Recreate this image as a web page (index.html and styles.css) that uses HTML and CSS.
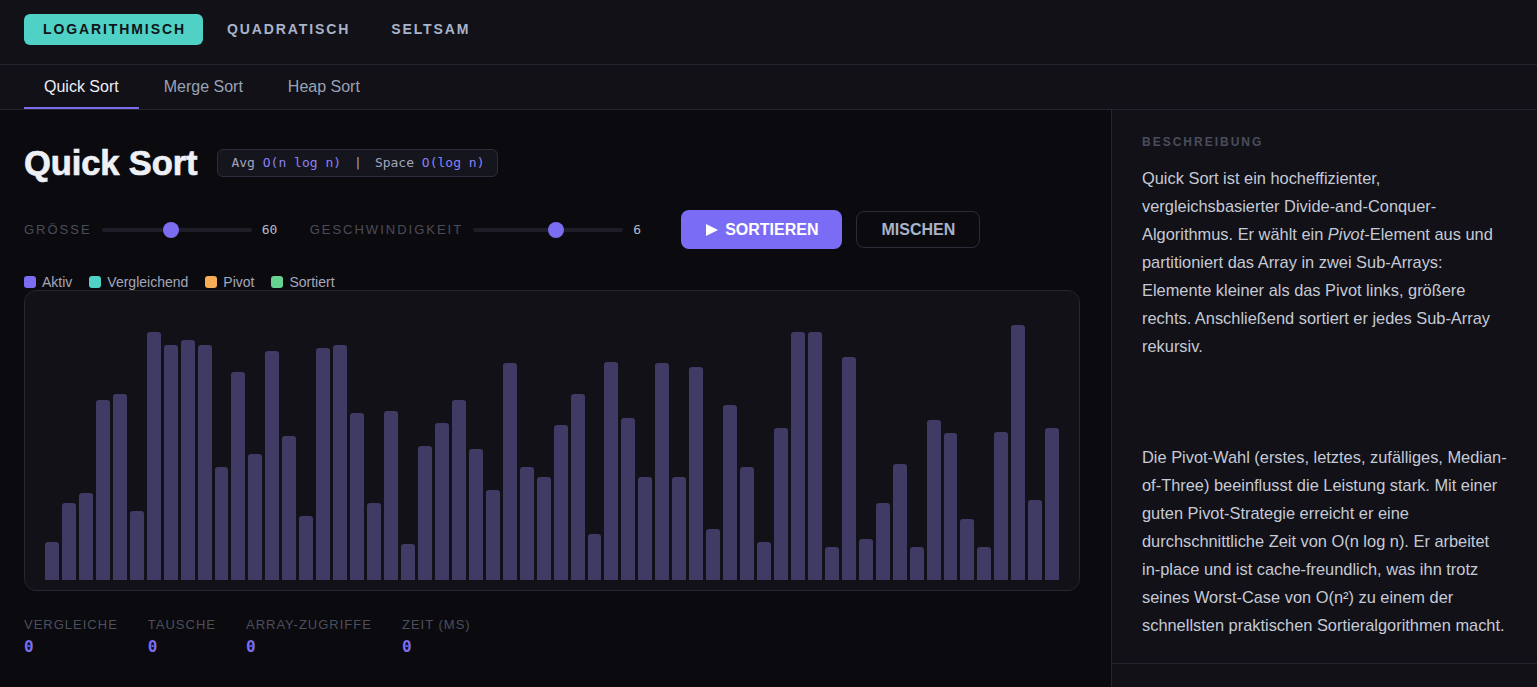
FILE: index.html
```html
<!DOCTYPE html>
<html lang="de">
<head>
<meta charset="utf-8">
<title>Sortier-Visualisierung</title>
<link rel="stylesheet" href="styles.css">
</head>
<body>
<div class="app">
  <nav class="topnav">
    <button class="pill pill-active">LOGARITHMISCH</button>
    <button class="pill">QUADRATISCH</button>
    <button class="pill">SELTSAM</button>
  </nav>
  <div class="tabs">
    <button class="tab tab-active">Quick Sort</button>
    <button class="tab">Merge Sort</button>
    <button class="tab">Heap Sort</button>
  </div>
  <div class="content">
    <main class="main">
      <div class="title-row">
        <h1 class="title">Quick Sort</h1>
        <div class="badge"><span class="muted">Avg</span> <span class="cx">O(n log n)</span><span class="sep">|</span><span class="muted">Space</span> <span class="cx">O(log n)</span></div>
      </div>
      <div class="controls">
        <div class="ctrl">
          <span class="ctrl-label">GRÖSSE</span>
          <input class="range" type="range" min="10" max="120" value="60">
          <span class="ctrl-value">60</span>
        </div>
        <div class="ctrl">
          <span class="ctrl-label">GESCHWINDIGKEIT</span>
          <input class="range" type="range" min="1" max="10" value="6">
          <span class="ctrl-value">6</span>
        </div>
        <button class="btn btn-primary"><span class="play"></span>SORTIEREN</button>
        <button class="btn btn-ghost">MISCHEN</button>
      </div>
      <div class="legend">
        <span class="legend-item"><span class="sw sw-active"></span>Aktiv</span>
        <span class="legend-item"><span class="sw sw-compare"></span>Vergleichend</span>
        <span class="legend-item"><span class="sw sw-pivot"></span>Pivot</span>
        <span class="legend-item"><span class="sw sw-sorted"></span>Sortiert</span>
      </div>
      <div class="chart">
        <div class="bars" id="bars"></div>
      </div>
      <div class="stats">
        <div class="stat"><div class="stat-label">VERGLEICHE</div><div class="stat-value">0</div></div>
        <div class="stat"><div class="stat-label">TAUSCHE</div><div class="stat-value">0</div></div>
        <div class="stat"><div class="stat-label">ARRAY-ZUGRIFFE</div><div class="stat-value">0</div></div>
        <div class="stat"><div class="stat-label">ZEIT (MS)</div><div class="stat-value">0</div></div>
      </div>
    </main>
    <aside class="side">
      <section class="desc">
        <div class="desc-label">BESCHREIBUNG</div>
        <p class="desc-text">Quick Sort ist ein hocheffizienter, vergleichsbasierter Divide-and-Conquer-Algorithmus. Er wählt ein <em>Pivot</em>-Element aus und partitioniert das Array in zwei Sub-Arrays: Elemente kleiner als das Pivot links, größere rechts. Anschließend sortiert er jedes Sub-Array rekursiv.</p>
        <p class="desc-text desc-second">Die Pivot-Wahl (erstes, letztes, zufälliges, Median-of-Three) beeinflusst die Leistung stark. Mit einer guten Pivot-Strategie erreicht er eine durchschnittliche Zeit von O(n log n). Er arbeitet in-place und ist cache-freundlich, was ihn trotz seines Worst-Case von O(n²) zu einem der schnellsten praktischen Sortieralgorithmen macht.</p>
      </section>
    </aside>
  </div>
</div>
<script src="script.js"></script>
</body>
</html>
```

FILE: script.js
```js
(function () {
  var heights = [38,77,87,180,186,69,248,235,240,235,113,208,126,229,144,64,232,235,167,77,169,36,134,157,180,131,90,217,113,103,155,186,46,218,162,103,217,103,213,51,175,113,38,152,248,248,33,223,41,77,116,33,160,147,61,33,148,255,80,152];
  var wrap = document.getElementById('bars');
  heights.forEach(function (h) {
    var b = document.createElement('div');
    b.className = 'bar';
    b.style.height = h + 'px';
    wrap.appendChild(b);
  });
})();
```

FILE: styles.css
```css
* { box-sizing: border-box; }
html, body { margin: 0; padding: 0; height: 100%; }
body {
  background: #0b0b0f;
  color: #e6e6ee;
  font-family: "Liberation Sans", Arial, sans-serif;
  overflow: hidden;
}
button { font-family: inherit; cursor: pointer; }
.app { display: flex; flex-direction: column; height: 100vh; }

.topnav {
  display: flex;
  align-items: center;
  gap: 5px;
  height: 65px;
  padding: 0 24px 6px;
  background: #111117;
  border-bottom: 1px solid #25252f;
}
.pill {
  height: 31px;
  padding: 0 17px 0 19px;
  border: none;
  border-radius: 6px;
  background: transparent;
  color: #a9b3c9;
  font-size: 14px;
  font-weight: 700;
  letter-spacing: 1.9px;
}
.pill-active { background: #4fd1c5; color: #0f1418; }

.tabs {
  display: flex;
  gap: 5px;
  padding: 0 24px;
  height: 45px;
  background: #111117;
  border-bottom: 1px solid #25252f;
}
.tab {
  padding: 2px 20px 0;
  height: 44px;
  border: none;
  border-bottom: 2px solid transparent;
  background: transparent;
  color: #9aa2b6;
  font-size: 16px;
}
.tab-active { color: #eeeef4; border-bottom-color: #7c6cf0; }

.content {
  flex: 1;
  display: grid;
  grid-template-columns: 1fr 426px;
  min-height: 0;
}
.main { padding: 33px 31px 0 24px; }

.title-row { display: flex; align-items: center; gap: 20px; height: 40px; }
.title {
  margin: 0;
  font-size: 34.5px;
  font-weight: 800;
  color: #eef0f6;
  letter-spacing: -0.1px;
  -webkit-text-stroke: 0.7px #eef0f6;
}
.badge {
  display: block;
  height: 28px;
  line-height: 26px;
  padding: 0 13px;
  border: 1px solid #2c2c3a;
  border-radius: 6px;
  background: #15151e;
  font-family: "DejaVu Sans Mono", "Liberation Mono", monospace;
  font-size: 13px;
  white-space: pre;
}
.muted { color: #a3a6bb; }
.cx { color: #8a80f8; }
.sep { color: #a3a6bb; margin: 0 13px; }

.controls {
  display: flex;
  align-items: center;
  gap: 24px;
  margin-top: 26px;
  height: 41px;
}
.ctrl { display: flex; align-items: center; gap: 10px; }
.ctrl-label {
  font-size: 13px;
  letter-spacing: 2px;
  color: #4b4c5a;
}
.ctrl-value {
  min-width: 24px;
  font-family: "DejaVu Sans Mono", "Liberation Mono", monospace;
  font-size: 13px;
  color: #b6b8c6;
}
.range {
  -webkit-appearance: none;
  appearance: none;
  width: 150px;
  height: 4px;
  margin: 0;
  border-radius: 2px;
  background: #1e1e28;
  outline: none;
}
.range::-webkit-slider-thumb {
  -webkit-appearance: none;
  width: 16px;
  height: 16px;
  border-radius: 50%;
  background: #7c6cf0;
  border: none;
}
.btn {
  display: flex;
  align-items: center;
  font-size: 16px;
  font-weight: 700;
  border-radius: 8px;
}
.btn-primary {
  height: 39px;
  padding: 0 24px 0 25px;
  border: none;
  background: #7b6cf6;
  color: #ffffff;
}
.play {
  width: 0;
  height: 0;
  border-top: 6.5px solid transparent;
  border-bottom: 6.5px solid transparent;
  border-left: 12px solid #ffffff;
  margin-right: 7px;
}
.btn-ghost {
  height: 37px;
  padding: 0 24px;
  margin-left: -10px;
  border: 1px solid #2b2c38;
  background: transparent;
  color: #a8b2c8;
}

.legend {
  display: flex;
  align-items: center;
  gap: 17px;
  margin-top: 24px;
  height: 16px;
  font-size: 14px;
  color: #a4a6bc;
}
.legend-item { display: flex; align-items: center; gap: 6px; }
.sw { width: 12px; height: 12px; border-radius: 3px; display: inline-block; }
.sw-active { background: #7c6cf0; }
.sw-compare { background: #4fd1c5; }
.sw-pivot { background: #f6ad55; }
.sw-sorted { background: #68d391; }

.chart {
  height: 301px;
  padding: 20px 20px 10px;
  border: 1px solid #262631;
  border-radius: 12px;
  background: #111117;
}
.bars {
  height: 100%;
  display: flex;
  align-items: flex-end;
  gap: 3px;
}
.bar {
  flex: 1;
  background: #403b64;
  border-radius: 3px 3px 0 0;
}

.stats {
  display: flex;
  gap: 30px;
  margin-top: 26px;
}
.stat-label {
  font-size: 13px;
  letter-spacing: 1px;
  color: #4d4e5d;
  line-height: 16px;
}
.stat-value {
  margin-top: 4px;
  font-family: "DejaVu Sans Mono", "Liberation Mono", monospace;
  font-weight: 700;
  font-size: 16px;
  line-height: 20px;
  color: #7c6cf0;
}

.side {
  background: #111117;
  border-left: 1px solid #25252f;
}
.desc {
  padding: 24px 29px 24px 30px;
  border-bottom: 1px solid #25252f;
}
.desc-label {
  font-size: 12px;
  font-weight: 700;
  letter-spacing: 2px;
  color: #4a4d5b;
  line-height: 16px;
}
.desc-text {
  margin: 14px 0 0;
  font-size: 16.4px;
  line-height: 28px;
  color: #c6cad6;
}
.desc-second { margin-top: 83px; }
```
